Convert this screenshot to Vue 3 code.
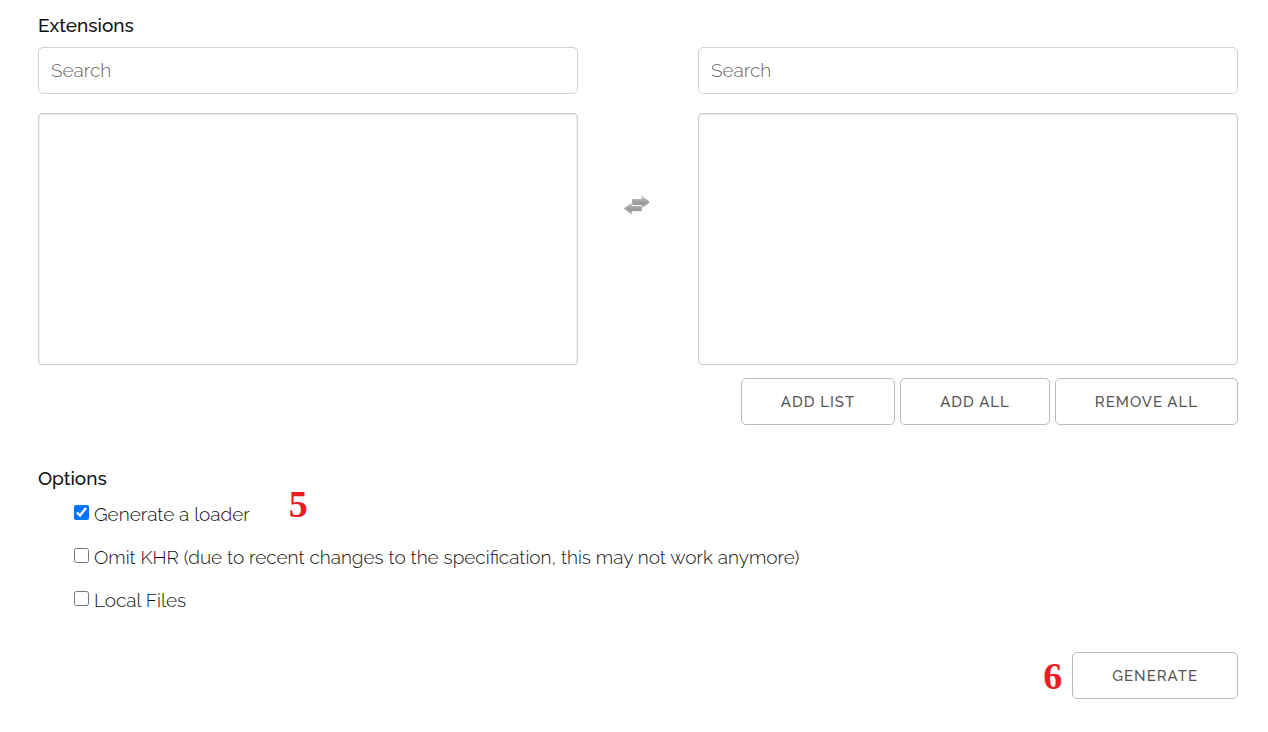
<script setup>
import { ref, reactive, computed } from "vue";

const availableSearch = ref("");
const selectedSearch = ref("");
const available = ref([]);
const selected = ref([]);

const options = reactive([
  { id: "loader", label: "Generate a loader", checked: true, step: "5" },
  {
    id: "omitkhr",
    label:
      "Omit KHR (due to recent changes to the specification, this may not work anymore)",
    checked: false,
  },
  { id: "local", label: "Local Files", checked: false },
]);

const filteredAvailable = computed(() => {
  return available.value.filter((e) => e.includes(availableSearch.value));
});
const filteredSelected = computed(() => {
  return selected.value.filter((e) => e.includes(selectedSearch.value));
});

function addAll() {
  selected.value.push(...available.value);
  available.value = [];
}

function removeAll() {
  available.value.push(...selected.value);
  selected.value = [];
}
</script>

<template>
  <form class="generator" @submit.prevent>
    <h2 class="title">Extensions</h2>
    <div class="extensions">
      <div class="column">
        <input
          v-model="availableSearch"
          class="search"
          type="text"
          placeholder="Search"
          aria-label="Search available extensions"
        />
        <select class="list" multiple aria-label="Available extensions">
          <option v-for="ext in filteredAvailable" :key="ext">{{ ext }}</option>
        </select>
      </div>
      <div class="switch">
        <svg width="30" height="22" viewBox="0 0 30 22">
          <defs>
            <linearGradient id="arrow" x1="0" y1="0" x2="0" y2="1">
              <stop offset="0" stop-color="#c8c8c8" />
              <stop offset=".6" stop-color="#999" />
              <stop offset="1" stop-color="#b4b4b4" />
            </linearGradient>
          </defs>
          <path d="M10 5H19.500V1.500L28 8l-8.500 6.500V11H10Z" fill="url(#arrow)" />
          <path
            d="M20 11.500H10V8L1.500 14.500 10 21V17.500H20Z"
            fill="url(#arrow)"
            stroke="#fff"
            stroke-width=".6"
          />
        </svg>
      </div>
      <div class="column">
        <input
          v-model="selectedSearch"
          class="search"
          type="text"
          placeholder="Search"
          aria-label="Search selected extensions"
        />
        <select class="list" multiple aria-label="Selected extensions">
          <option v-for="ext in filteredSelected" :key="ext">{{ ext }}</option>
        </select>
      </div>
    </div>
    <div class="actions">
      <button type="button">ADD LIST</button>
      <button type="button" @click="addAll">ADD ALL</button>
      <button type="button" @click="removeAll">REMOVE ALL</button>
    </div>

    <h2 class="title">Options</h2>
    <ul class="options">
      <li v-for="option in options" :key="option.id">
        <input :id="option.id" v-model="option.checked" type="checkbox" />
        <label :for="option.id">{{ option.label }}</label>
        <span v-if="option.step" class="step">{{ option.step }}</span>
      </li>
    </ul>

    <div class="submit">
      <span class="step">6</span>
      <button type="submit">GENERATE</button>
    </div>
  </form>
</template>

<style>
body {
  background: #fff;
}
</style>

<style scoped>
.generator {
  padding: 11px 30px 32px 38px;
  font-family: Raleway, Lato, sans-serif;
  font-size: 19px;
  font-weight: 300;
  color: #111;
}

.title {
  margin: 0;
  font-size: 19px;
  line-height: 28px;
  font-weight: 500;
}

.extensions {
  display: grid;
  grid-template-columns: 1fr 120px 1fr;
  margin-top: 8px;
}

.column {
  display: flex;
  flex-direction: column;
  gap: 19px;
  min-width: 0;
}

.search {
  box-sizing: border-box;
  width: 100%;
  height: 47px;
  padding: 0 12px 2px;
  border: 1px solid #d1d1d1;
  border-radius: 5px;
  background: #fff;
  font: inherit;
  color: inherit;
}

.search::placeholder {
  color: #666;
}

.list {
  box-sizing: border-box;
  width: 100%;
  height: 252px;
  border: 1px solid #ccc;
  border-radius: 4px;
  background: #fff;
  box-shadow: inset 0 1px 2px rgba(0, 0, 0, 0.12);
}

.switch {
  display: flex;
  justify-content: center;
  align-items: center;
  padding: 0 2px 2px 0;
}

.actions {
  display: flex;
  justify-content: flex-end;
  gap: 5px;
  margin: 13px 0 39px;
}

button {
  height: 47px;
  padding: 0 39px;
  border: 1px solid #bbb;
  border-radius: 5px;
  background: #fff;
  font-family: inherit;
  font-size: 15px;
  font-weight: 500;
  letter-spacing: 1px;
  color: #555;
  cursor: pointer;
}

.options {
  display: flex;
  flex-direction: column;
  gap: 15px;
  margin: 8px 0 0;
  padding: 0 0 0 36px;
  list-style: none;
}

.options li {
  display: flex;
  align-items: center;
  gap: 5px;
  line-height: 28px;
}

.options input {
  width: 15px;
  height: 15px;
  margin: 0 0 4px;
}

.step {
  font-family: "Liberation Serif", serif;
  font-size: 38px;
  line-height: 28px;
  font-weight: 700;
  color: #ed1c24;
}

.options .step {
  margin: -20px 0 0 34px;
}

.submit {
  display: flex;
  justify-content: flex-end;
  align-items: center;
  gap: 10px;
  margin-top: 38px;
}
</style>
